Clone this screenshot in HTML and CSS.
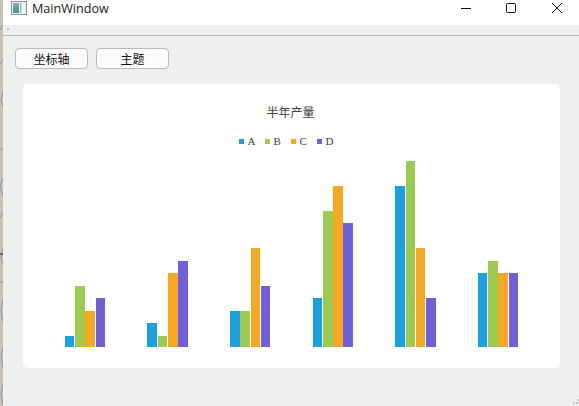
FILE: index.html
```html
<!DOCTYPE html>
<html lang="zh">
<head>
<meta charset="utf-8">
<title>MainWindow</title>
<link rel="stylesheet" href="styles.css">
</head>
<body>
<div class="desktop" aria-hidden="true">
  <svg width="3" height="406" viewBox="0 0 3 406">
    <path d="M3 25L0 30M0 64L3 59M3 92L1 100L3 106M0 150L3 148M3 178L0 186L3 196M3 212L0 218M3 248L1 258L3 264M0 282H3M3 300L1 310L3 322" stroke="#8b9aa0" stroke-width="1" fill="none"/>
    <path d="M0 254H3" stroke="#55544c" stroke-width="1.5"/>
    <path d="M3 348L1 356L3 368M3 384L1 394L3 404" stroke="#8b9aa0" fill="none"/>
  </svg>
</div>
<div class="window">
  <header class="titlebar">
    <svg class="app-icon" width="16" height="14" viewBox="0 0 16 14">
      <rect x="0.5" y="0.5" width="15" height="13" fill="#e9edef" stroke="#8c979c"/>
      <rect x="2" y="2" width="6" height="10" fill="url(#pane)"/>
      <rect x="9" y="2" width="1.5" height="10" fill="#a7b8c2"/>
      <rect x="11" y="2" width="3" height="10" fill="#f1f4f5"/>
      <defs>
        <linearGradient id="pane" x1="0" y1="0" x2="0" y2="1">
          <stop offset="0" stop-color="#8fa7b4"/>
          <stop offset="1" stop-color="#3f9a78"/>
        </linearGradient>
      </defs>
    </svg>
    <span class="title">MainWindow</span>
    <div class="controls">
      <svg class="ctl" width="46" height="16" viewBox="0 0 46 16"><path d="M20 8.5H30" stroke="#111" fill="none"/></svg>
      <svg class="ctl" width="46" height="16" viewBox="0 0 46 16"><rect x="19.5" y="3.5" width="9" height="9" rx="1" stroke="#111" fill="none"/></svg>
      <svg class="ctl" width="46" height="16" viewBox="0 0 46 16"><path d="M19 3L29 13M29 3L19 13" stroke="#111" fill="none"/></svg>
    </div>
  </header>
  <div class="menubar"><span class="grip"></span></div>
  <main class="content">
    <div class="toolbar">
      <button class="btn">坐标轴</button>
      <button class="btn">主题</button>
    </div>
    <section class="card">
      <h1 class="chart-title">半年产量</h1>
      <ul class="legend">
        <li><i class="swatch a"></i>A</li>
        <li><i class="swatch b"></i>B</li>
        <li><i class="swatch c"></i>C</li>
        <li><i class="swatch d"></i>D</li>
      </ul>
      <div class="plot">
        <div class="slot"><div class="group"><i class="bar a" style="height:11px"></i><i class="bar b" style="height:61px"></i><i class="bar c" style="height:36px"></i><i class="bar d" style="height:49px"></i></div></div>
        <div class="slot"><div class="group"><i class="bar a" style="height:24px"></i><i class="bar b" style="height:11px"></i><i class="bar c" style="height:74px"></i><i class="bar d" style="height:86px"></i></div></div>
        <div class="slot"><div class="group"><i class="bar a" style="height:36px"></i><i class="bar b" style="height:36px"></i><i class="bar c" style="height:99px"></i><i class="bar d" style="height:61px"></i></div></div>
        <div class="slot"><div class="group"><i class="bar a" style="height:49px"></i><i class="bar b" style="height:136px"></i><i class="bar c" style="height:161px"></i><i class="bar d" style="height:124px"></i></div></div>
        <div class="slot"><div class="group"><i class="bar a" style="height:161px"></i><i class="bar b" style="height:186px"></i><i class="bar c" style="height:99px"></i><i class="bar d" style="height:49px"></i></div></div>
        <div class="slot"><div class="group"><i class="bar a" style="height:74px"></i><i class="bar b" style="height:86px"></i><i class="bar c" style="height:74px"></i><i class="bar d" style="height:74px"></i></div></div>
      </div>
    </section>
  </main>
  <svg class="sizegrip" width="6" height="6" viewBox="0 0 6 6"><path d="M4 0h2v2H4zM0 3h2v2H0zM3 3h2v2H3z" fill="#c4c4c4"/></svg>
</div>
</body>
</html>
```
FILE: styles.css
```css
* { box-sizing: border-box; }
html, body { margin: 0; height: 100%; }
body {
  display: flex;
  width: 579px;
  height: 406px;
  overflow: hidden;
  background: #efefef;
  font-family: "Noto Sans CJK SC", sans-serif;
}
.desktop {
  width: 3px;
  flex: none;
  background: #c9c2b2;
}
.desktop svg { display: block; }
.window {
  flex: 1;
  display: flex;
  flex-direction: column;
  position: relative;
  background: #efefef;
}
.titlebar {
  height: 25px;
  flex: none;
  display: flex;
  align-items: flex-start;
  background: #fff;
  padding-left: 8px;
}
.app-icon { flex: none; margin-top: 1px; }
.title {
  margin: 1px 0 0 5px;
  font: 12.6px/16px "Open Sans", "Noto Sans", sans-serif;
  color: #1a1a1a;
}
.controls {
  margin-left: auto;
  display: flex;
}
.ctl { display: block; }
.menubar {
  height: 11px;
  flex: none;
  background: #efefef;
  border-bottom: 1px solid #b9b9b9;
  position: relative;
}
.grip {
  position: absolute;
  left: 4px;
  top: 3px;
  width: 2px;
  height: 2px;
  background: #bdbdbd;
}
.content {
  flex: 1;
  padding: 12px 0 38px 12px;
  display: flex;
  flex-direction: column;
}
.toolbar {
  display: flex;
  gap: 8px;
  height: 21px;
  flex: none;
}
.btn {
  width: 73px;
  height: 21px;
  padding: 0;
  border: 1px solid #bcbcbc;
  border-radius: 4px;
  background: #fbfbfb;
  color: #111;
  font: 12px/19px "Noto Sans CJK SC", sans-serif;
}
.card {
  width: 537px;
  height: 284px;
  margin: 15px 0 0 8px;
  flex: none;
  background: #fff;
  border-radius: 5px;
  display: flex;
  flex-direction: column;
  align-items: center;
  padding: 0 20.7px 21px;
}
.chart-title {
  margin: 19px 0 0 -2px;
  font: 400 12px/17px "Noto Sans CJK SC", sans-serif;
  color: #404040;
}
.legend {
  list-style: none;
  margin: 15px 0 0 -2px;
  padding: 0;
  display: flex;
  font: 11px/12px "Liberation Serif", serif;
  color: #404040;
}
.legend li {
  display: flex;
  align-items: center;
  gap: 4px;
  width: 26px;
}
.swatch {
  width: 5px;
  height: 5px;
  display: block;
}
.a { background: #1ba1e2; }
.b { background: #9bcb52; }
.c { background: #f7a823; }
.d { background: #6f5fd8; }
.plot {
  flex: 1;
  align-self: stretch;
  display: flex;
}
.slot {
  flex: 1;
  display: flex;
  justify-content: center;
  align-items: flex-end;
}
.group {
  width: 40.35px;
  display: flex;
  align-items: flex-end;
  gap: 0.65px;
}
.bar {
  flex: 1;
  display: block;
}
.sizegrip {
  position: absolute;
  right: 0;
  bottom: 1px;
}
```
